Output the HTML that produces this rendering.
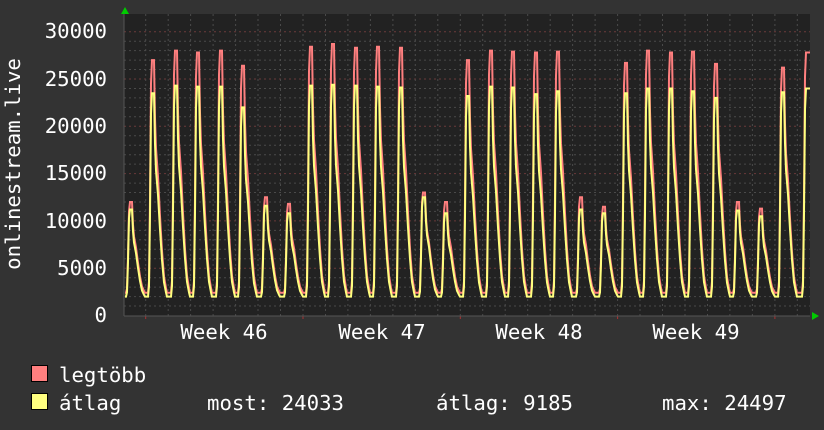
<!DOCTYPE html>
<html><head><meta charset="utf-8"><style>
html,body{margin:0;padding:0;background:#333;}
body{width:824px;height:430px;overflow:hidden;position:relative;font-family:"DejaVu Sans Mono","Liberation Mono",monospace;color:#fff;}
svg{position:absolute;left:0;top:0}
</style></head><body>
<svg id="g" width="824" height="430" xmlns="http://www.w3.org/2000/svg" font-family="DejaVu Sans Mono, Liberation Mono, monospace" font-size="20.7" fill="#fff">
<rect x="124" y="14" width="686" height="302" fill="#222"/>
<g id="grid"></g>
<g id="data"></g>
<polygon points="121,14 129,14 125,7" fill="#0c0"/>
<polygon points="812,312 812,320 819,316" fill="#0c0"/>
<g text-anchor="end">
<text x="107" y="38">30000</text>
<text x="107" y="86">25000</text>
<text x="107" y="133">20000</text>
<text x="107" y="180">15000</text>
<text x="107" y="228">10000</text>
<text x="107" y="275">5000</text>
<text x="107" y="322">0</text>
</g>
<text transform="translate(20,164) rotate(-90)" text-anchor="middle">onlinestream.live</text>
<g text-anchor="middle">
<text x="224" y="339">Week 46</text>
<text x="382" y="339">Week 47</text>
<text x="539" y="339">Week 48</text>
<text x="696" y="339">Week 49</text>
</g>
<rect x="31.5" y="365.5" width="16" height="16" fill="#ff7f7f" stroke="#000"/>
<rect x="31.5" y="393.5" width="16" height="16" fill="#ffff7f" stroke="#000"/>
<text x="59" y="382">legtöbb</text>
<text x="59" y="410">átlag</text>
<text x="207" y="410">most: 24033</text>
<text x="436" y="410">átlag: 9185</text>
<text x="662" y="410">max: 24497</text>
</svg>
<script>
var X0=124,X1=810,Y0=315.5,S=0.00946;
function y(v){return Y0-v*S;}
var g=document.getElementById('grid'),h='';
for(var v=1000;v<=30000;v+=1000){var yy=y(v).toFixed(1);var maj=v%5000==0;
h+='<line x1="124" x2="810" y1="'+yy+'" y2="'+yy+'" stroke="'+(maj?'#6a3a3a':'#4a4a4a')+'" stroke-dasharray="2,3"/>';}
for(var i=0;i<31;i++){var x=(145.7+22.47*i);if(x>810)break;x=x.toFixed(1);
h+='<line x1="'+x+'" x2="'+x+'" y1="14" y2="316" stroke="#4a4a4a" stroke-dasharray="2,3"/>';
if(i%7==0)h+='<line x1="'+x+'" x2="'+x+'" y1="316" y2="319" stroke="#a33"/>';}
h+='<line x1="124" x2="124" y1="14" y2="316" stroke="#555"/><line x1="124" x2="810" y1="316" y2="316" stroke="#555"/>';
g.innerHTML=h;
var px=[131,153,176,198,221,243,266,289,311,333,356,378,401,424,446,468,491,513,536,558,581,604,626,648,671,693,716,738,761,783,807];
var mx=[12000,27000,28000,27800,28000,26400,12500,11800,28400,28700,28300,28400,28300,13000,12000,27000,28000,27900,27800,27900,12500,11500,26700,28000,27800,27900,26600,12000,11300,26200,27800];
var av=[11200,23500,24300,24200,24200,22000,11600,10800,24300,24400,24300,24200,24100,12500,10800,23200,24200,24100,23400,23700,11200,10800,23500,24000,24000,23700,23000,11100,10500,23600,24000];
var T=[[-5,0],[-4,0.05],[-3,0.4],[-2,0.9],[-1,1],[1,1],[2,0.75],[3,0.62],[5,0.5],[7,0.33],[9,0.18],[11,0.07],[13,0.02],[14,0]];
function f(t){if(t<=T[0][0]||t>=T[T.length-1][0])return 0;for(var k=1;k<T.length;k++){if(t<=T[k][0]){var a=T[k-1],b=T[k];return a[1]+(b[1]-a[1])*(t-a[0])/(b[0]-a[0]);}}return 0;}
function path(arr,tr){var d='';for(var x=125;x<=810;x++){var v=tr;for(var i=0;i<px.length;i++){var t=x-px[i];if(i==px.length-1&&t>0)t=0;if(t>-6&&t<15){var w=tr+(arr[i]-tr)*f(t);if(w>v)v=w;}}
d+=(x==125?'M':'L')+x+','+y(v).toFixed(1);}return d;}
document.getElementById('data').innerHTML='<path d="'+path(mx,2400)+'" fill="none" stroke="#ff7f7f" stroke-width="2"/><path d="'+path(av,2000)+'" fill="none" stroke="#ffff7f" stroke-width="2"/>';
</script>
</body></html>
